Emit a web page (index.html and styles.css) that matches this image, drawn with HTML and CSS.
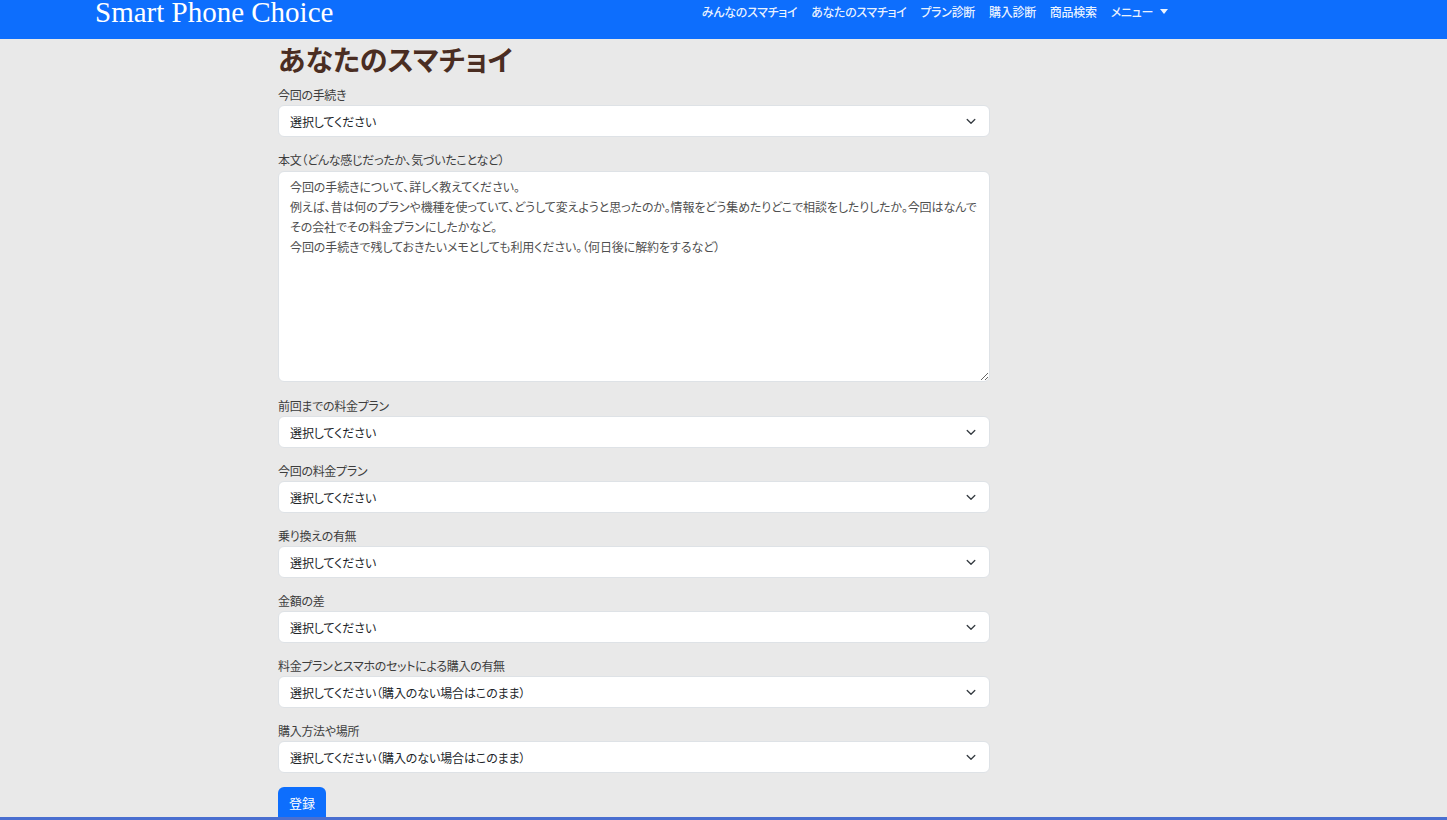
FILE: index.html
```html
<!DOCTYPE html>
<html lang="ja">
<head>
<meta charset="utf-8">
<title>あなたのスマチョイ</title>
<link rel="stylesheet" href="styles.css">
</head>
<body>
<header class="navbar">
  <div class="nav-inner">
    <a class="brand" href="#">Smart Phone Choice</a>
    <ul class="nav-links">
      <li><a href="#">みんなのスマチョイ</a></li>
      <li><a href="#">あなたのスマチョイ</a></li>
      <li><a href="#">プラン診断</a></li>
      <li><a href="#">購入診断</a></li>
      <li><a href="#">商品検索</a></li>
      <li><a href="#" class="dropdown">メニュー<span class="caret"></span></a></li>
    </ul>
  </div>
</header>
<main class="main">
  <h1 class="title">あなたのスマチョイ</h1>
  <form class="form">
    <div class="group">
      <label class="label">今回の手続き</label>
      <div class="select-wrap">
        <select class="select"><option>選択してください</option></select>
        <svg class="chev" width="10" height="7" viewBox="0 0 10 7"><path d="M1.2 1.5 L5 5.2 L8.8 1.5" fill="none" stroke="#343a40" stroke-width="1.3" stroke-linecap="round" stroke-linejoin="round"/></svg>
      </div>
    </div>
    <div class="group group-text">
      <label class="label">本文（どんな感じだったか、気づいたことなど）</label>
      <textarea class="textarea" placeholder="今回の手続きについて、詳しく教えてください。
例えば、昔は何のプランや機種を使っていて、どうして変えようと思ったのか。情報をどう集めたりどこで相談をしたりしたか。今回はなんでその会社でその料金プランにしたかなど。
今回の手続きで残しておきたいメモとしても利用ください。（何日後に解約をするなど）"></textarea>
    </div>
    <div class="group">
      <label class="label">前回までの料金プラン</label>
      <div class="select-wrap">
        <select class="select"><option>選択してください</option></select>
        <svg class="chev" width="10" height="7" viewBox="0 0 10 7"><path d="M1.2 1.5 L5 5.2 L8.8 1.5" fill="none" stroke="#343a40" stroke-width="1.3" stroke-linecap="round" stroke-linejoin="round"/></svg>
      </div>
    </div>
    <div class="group">
      <label class="label">今回の料金プラン</label>
      <div class="select-wrap">
        <select class="select"><option>選択してください</option></select>
        <svg class="chev" width="10" height="7" viewBox="0 0 10 7"><path d="M1.2 1.5 L5 5.2 L8.8 1.5" fill="none" stroke="#343a40" stroke-width="1.3" stroke-linecap="round" stroke-linejoin="round"/></svg>
      </div>
    </div>
    <div class="group">
      <label class="label">乗り換えの有無</label>
      <div class="select-wrap">
        <select class="select"><option>選択してください</option></select>
        <svg class="chev" width="10" height="7" viewBox="0 0 10 7"><path d="M1.2 1.5 L5 5.2 L8.8 1.5" fill="none" stroke="#343a40" stroke-width="1.3" stroke-linecap="round" stroke-linejoin="round"/></svg>
      </div>
    </div>
    <div class="group">
      <label class="label">金額の差</label>
      <div class="select-wrap">
        <select class="select"><option>選択してください</option></select>
        <svg class="chev" width="10" height="7" viewBox="0 0 10 7"><path d="M1.2 1.5 L5 5.2 L8.8 1.5" fill="none" stroke="#343a40" stroke-width="1.3" stroke-linecap="round" stroke-linejoin="round"/></svg>
      </div>
    </div>
    <div class="group">
      <label class="label">料金プランとスマホのセットによる購入の有無</label>
      <div class="select-wrap">
        <select class="select"><option>選択してください（購入のない場合はこのまま）</option></select>
        <svg class="chev" width="10" height="7" viewBox="0 0 10 7"><path d="M1.2 1.5 L5 5.2 L8.8 1.5" fill="none" stroke="#343a40" stroke-width="1.3" stroke-linecap="round" stroke-linejoin="round"/></svg>
      </div>
    </div>
    <div class="group">
      <label class="label">購入方法や場所</label>
      <div class="select-wrap">
        <select class="select"><option>選択してください（購入のない場合はこのまま）</option></select>
        <svg class="chev" width="10" height="7" viewBox="0 0 10 7"><path d="M1.2 1.5 L5 5.2 L8.8 1.5" fill="none" stroke="#343a40" stroke-width="1.3" stroke-linecap="round" stroke-linejoin="round"/></svg>
      </div>
    </div>
    <button type="button" class="btn">登録</button>
  </form>
</main>
<footer class="footer"></footer>
</body>
</html>
```

FILE: styles.css
```css
* { box-sizing: border-box; }
html, body {
  margin: 0;
  padding: 0;
}
body {
  background: #e9e9e9;
  font-family: "Noto Sans CJK JP", "Noto Sans", sans-serif;
  font-feature-settings: "palt";
  color: #212529;
}
.navbar {
  background: #0d6efd;
  height: 39px;
}
.nav-inner {
  display: flex;
  justify-content: space-between;
  align-items: flex-start;
  margin-left: 95px;
  width: 1080px;
}
.brand {
  font-family: "Liberation Serif", "Times New Roman", serif;
  font-size: 29px;
  line-height: 25px;
  color: #fff;
  text-decoration: none;
  font-feature-settings: normal;
}
.nav-links {
  display: flex;
  list-style: none;
  margin: 0;
  padding: 0;
}
.nav-links a {
  display: block;
  padding: 2px 7px;
  font-size: 12px;
  letter-spacing: -0.3px;
  line-height: 20px;
  font-weight: 500;
  color: rgba(255, 255, 255, 0.92);
  text-decoration: none;
}
.caret {
  display: inline-block;
  margin-left: 7px;
  vertical-align: 3px;
  border-top: 5px solid rgba(255, 255, 255, 0.92);
  border-left: 4px solid transparent;
  border-right: 4px solid transparent;
}
.main {
  margin-left: 278px;
  width: 712px;
}
.title {
  margin: 0;
  height: 46px;
  font-size: 28px;
  line-height: 40px;
  font-weight: 700;
  color: #4a2d22;
}
.form {
  display: flex;
  flex-direction: column;
}
.group {
  display: flex;
  flex-direction: column;
  margin-bottom: 13px;
}
.group-text {
  margin-bottom: 14px;
}
.label {
  font-size: 12px;
  letter-spacing: -0.3px;
  line-height: 20px;
  color: #3d3d3d;
}
.select-wrap {
  position: relative;
}
.select {
  display: block;
  width: 100%;
  height: 32px;
  padding: 0 34px 0 11px;
  font-family: inherit;
  font-feature-settings: "palt";
  font-size: 12px;
  letter-spacing: -0.1px;
  color: #212529;
  background: #fff;
  border: 1px solid #dee2e6;
  border-radius: 6px;
  appearance: none;
  -webkit-appearance: none;
  outline: none;
}
.chev {
  position: absolute;
  right: 14px;
  top: 13px;
  pointer-events: none;
}
.textarea {
  display: block;
  width: 100%;
  height: 211px;
  margin-top: 1px;
  padding: 5px 11px;
  font-family: inherit;
  font-feature-settings: "palt";
  font-size: 12px;
  letter-spacing: -0.1px;
  line-height: 20px;
  background: #fff;
  border: 1px solid #dee2e6;
  border-radius: 6px;
  resize: vertical;
  outline: none;
}
.textarea::placeholder {
  color: #4f4f4f;
  opacity: 1;
}
.btn {
  align-self: flex-start;
  margin-top: 1px;
  height: 30px;
  padding: 0 11px;
  font-family: inherit;
  font-size: 13px;
  color: #fff;
  background: #0d6efd;
  border: none;
  border-radius: 6px 6px 0 0;
}
.footer {
  height: 4px;
  background: #4a6fd0;
}
```
